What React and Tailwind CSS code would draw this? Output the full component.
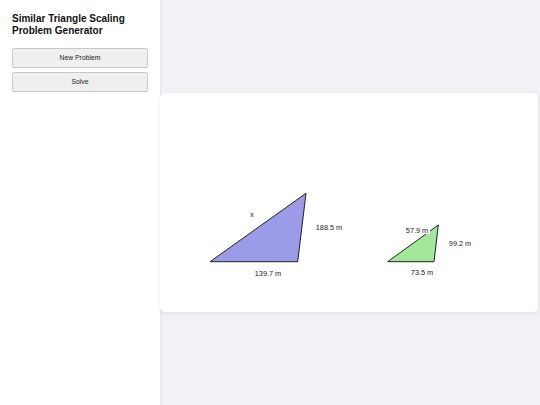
export default function App() {
  return (
    <div className="flex h-[405px] w-[540px] overflow-hidden bg-[#f1f2f6] font-['Liberation_Sans',Arial,sans-serif] text-[#111]">
      <aside className="flex w-[160px] shrink-0 flex-col gap-[4px] bg-white px-[12px] pt-[13px] shadow-[1px_0_3px_rgba(0,0,0,0.06)]">
        <h1 className="mb-[8px] text-[10px] font-bold leading-[11.5px]">
          Similar Triangle Scaling Problem Generator
        </h1>
        <button className="h-[20px] w-full rounded-[2px] border border-[#c8c8c8] bg-[#efefef] text-[6.8px] text-[#222]">
          New Problem
        </button>
        <button className="h-[20px] w-full rounded-[2px] border border-[#c8c8c8] bg-[#efefef] text-[6.8px] text-[#222]">
          Solve
        </button>
      </aside>
      <main className="flex flex-1 items-center">
        <div className="h-[219px] w-[378px] rounded-[5px] bg-white shadow-[0_1px_4px_rgba(0,0,0,0.08)]">
          <svg width="378" height="219" viewBox="0 0 378 219" fontFamily="Liberation Sans, Arial, sans-serif" fontSize="7.3" fill="#222">
            <polygon points="50,168.7 137.7,168.7 146,100.3" fill="#9b9be8" stroke="#222" strokeWidth="1" />
            <text x="92" y="123.5" textAnchor="middle" fill="#222">x</text>
            <text x="169" y="136.5" textAnchor="middle" fill="#222">188.5 m</text>
            <text x="108" y="182.5" textAnchor="middle" fill="#222">139.7 m</text>

            <polygon points="227.7,168.7 274,168.7 278.3,132" fill="#a3e89a" stroke="#222" strokeWidth="1" />
            <rect x="244" y="132.7" width="26" height="8.3" fill="#fff" />
            <text x="257" y="139.5" textAnchor="middle" fill="#222">57.9 m</text>
            <text x="300" y="152.5" textAnchor="middle" fill="#222">99.2 m</text>
            <text x="262" y="181.5" textAnchor="middle" fill="#222">73.5 m</text>
          </svg>
        </div>
      </main>
    </div>
  );
}
